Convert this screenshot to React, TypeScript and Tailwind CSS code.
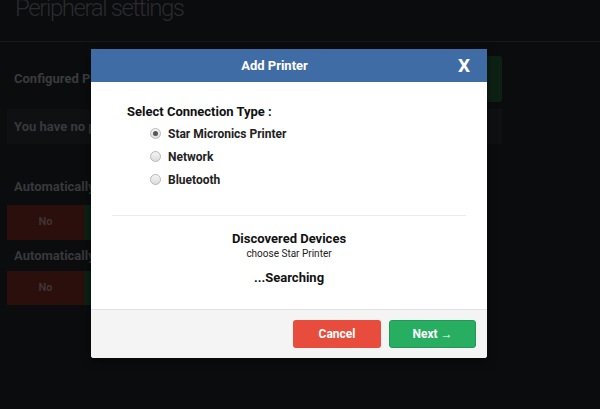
import React from 'react';

const font = { fontFamily: 'Roboto, "Liberation Sans", sans-serif' };

function Background() {
  return (
    <div className="min-h-[409px] w-[600px] overflow-hidden bg-[#0b0c0e]" style={font}>
      <h1 className="-mt-[6px] h-[48px] border-b border-[#17181b] pl-[15px] text-[24px] font-light leading-[28px] tracking-[-1.4px] text-[#2a2b2f]">
        Peripheral settings
      </h1>
      <div className="w-[502px] pl-[7px]">
        <div className="mt-[14px] flex h-[46px] items-center justify-between">
          <span className="pl-[7px] text-[13px] font-bold text-[#3a3b3e]">Configured Printers</span>
          <div className="h-[46px] w-[90px] rounded-[3px] bg-[#0c2114]" />
        </div>
        <div className="mt-[7px] flex h-[35px] items-center bg-[#0f1012] pl-[7px] text-[13px] font-bold text-[#38393c]">
          You have no printers configured
        </div>
        <div className="mt-[34px] pl-[7px] text-[13px] font-bold leading-[18px] text-[#38393c]">
          Automatically print receipts
        </div>
        <div className="mt-[9px] flex h-[35px]">
          <div className="flex w-[77px] items-center justify-center bg-[#2a0f0c] text-[11px] font-bold text-[#3f3433]">No</div>
          <div className="w-[77px] bg-[#0c2114]" />
        </div>
        <div className="mt-[7px] pl-[7px] text-[13px] font-bold leading-[18px] text-[#38393c]">
          Automatically print kitchen tickets
        </div>
        <div className="mt-[6px] flex h-[34px]">
          <div className="flex w-[77px] items-center justify-center bg-[#2a0f0c] text-[11px] font-bold text-[#3f3433]">No</div>
          <div className="w-[77px] bg-[#0c2114]" />
        </div>
      </div>
    </div>
  );
}

function Radio({ checked, label }: { checked?: boolean; label: string }) {
  return (
    <label className="flex h-[23px] items-center gap-[7px] pl-[23px]">
      <span className="flex h-[11px] w-[11px] items-center justify-center rounded-full border border-[#b8b8b8] bg-gradient-to-b from-[#f4f4f4] to-[#dcdcdc]">
        {checked && <span className="h-[5px] w-[5px] rounded-full bg-[#555]" />}
      </span>
      <span className="text-[12px] font-bold leading-[16px] text-[#222]">{label}</span>
    </label>
  );
}

function AddPrinterModal() {
  return (
    <div className="absolute left-[91px] top-[49px] w-[396px] overflow-hidden rounded-b-[3px] bg-white shadow-[0_3px_10px_rgba(0,0,0,0.5)]" style={font}>
      <div className="flex h-[33px] items-center bg-[#3f6ca4]">
        <span className="flex-1 text-center text-[13px] font-bold text-white">Add Printer</span>
        <span className="mr-[17px] w-[12px] text-center text-[19px] font-bold leading-[22px] text-white">X</span>
      </div>
      <div className="px-[21px] pt-[21px]">
        <div className="pl-[15px] text-[13px] font-bold leading-[18px] text-[#111]">Select Connection Type :</div>
        <div className="pl-[15px] pt-[1px]">
          <Radio checked label="Star Micronics Printer" />
          <Radio label="Network" />
          <Radio label="Bluetooth" />
        </div>
        <div className="mt-[24px] border-t border-[#eaeaea]" />
        <div className="pt-[14px] pb-[22px] text-center">
          <div className="text-[13px] font-bold leading-[18px] text-[#111]">Discovered Devices</div>
          <div className="text-[10px] leading-[12px] text-[#222]">choose Star Printer</div>
          <div className="mt-[9px] text-[13px] font-bold leading-[18px] text-[#111]">...Searching</div>
        </div>
      </div>
      <div className="flex h-[49px] items-start justify-end gap-[8px] border-t border-[#e2e2e2] bg-[#f4f4f4] pr-[11px] pt-[10px]">
        <button className="h-[28px] w-[88px] rounded-[3px] bg-[#e74c3c] text-[12px] font-bold text-white">Cancel</button>
        <button className="h-[28px] w-[87px] rounded-[3px] border border-[#229955] bg-[#27ae60] text-[12px] font-bold text-white">Next →</button>
      </div>
    </div>
  );
}

export default function App() {
  return (
    <div className="relative h-[409px] w-[600px] overflow-hidden">
      <Background />
      <AddPrinterModal />
    </div>
  );
}
